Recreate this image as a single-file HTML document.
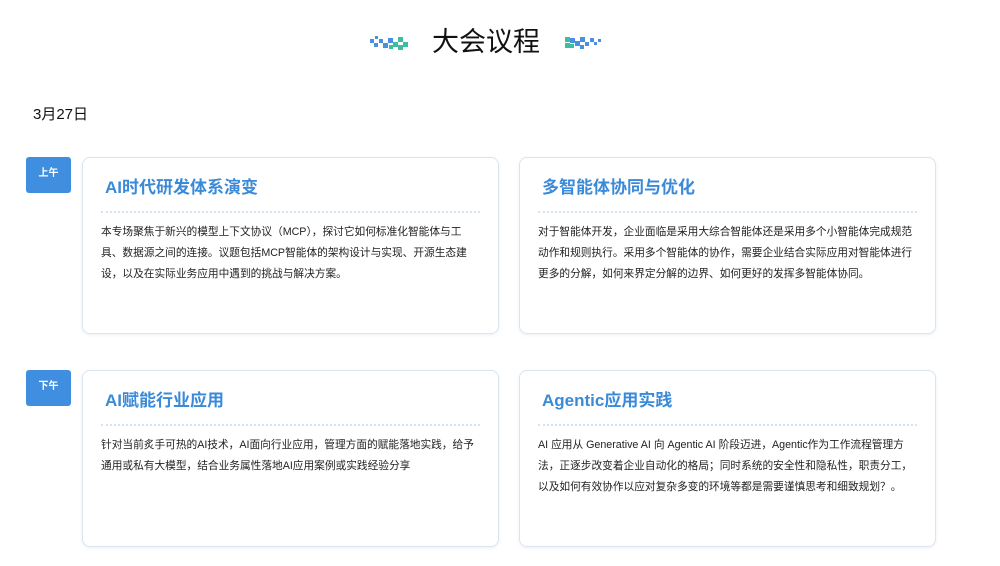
<!DOCTYPE html>
<html><head><meta charset="utf-8"><style>
*{margin:0;padding:0;box-sizing:border-box}
body{width:1000px;height:566px;background:#fff;font-family:"Liberation Sans","Noto Sans CJK SC",sans-serif;position:relative;overflow:hidden;color:#222}
.h{position:absolute;top:24px;left:432px;font-size:27px;color:#111;line-height:36px;white-space:nowrap}
.ic{position:absolute;top:35px}
.date{position:absolute;left:33px;top:103px;font-size:15px;color:#111}
.badge{position:absolute;left:26px;width:45px;height:36px;background:#3f8ee0;border-radius:3px;color:#fff;font-size:10px;text-align:center;line-height:34px;font-weight:bold}
.card{position:absolute;width:417px;height:177px;border:1px solid #d8e5f2;border-radius:8px;box-shadow:0 1px 3px rgba(120,150,190,.15);padding:0 18px}
.card h3{font-size:17px;color:#3a8ad8;font-weight:bold;margin-top:18px;margin-left:4px;height:24px;line-height:24px}
.card .ln{margin-top:11px;border-top:2px dotted #d5e3f3;margin-right:0}
.card p{margin-top:9px;font-size:10.7px;letter-spacing:0;line-height:21px;color:#222;white-space:nowrap}
</style></head><body>
<svg class="ic" style="left:370px" width="38" height="16" viewBox="0 0 38 16">
<g fill="#4a90e2"><rect x="0" y="4" width="4" height="4"/><rect x="4" y="8" width="4" height="4"/><rect x="9" y="4" width="4" height="4"/><rect x="13" y="8" width="5" height="5"/><rect x="18" y="3" width="5" height="5"/><rect x="5" y="1" width="3" height="3"/></g>
<g fill="#3cbfa0"><rect x="23" y="7" width="5" height="5"/><rect x="28" y="2" width="5" height="5"/><rect x="33" y="7" width="5" height="5"/><rect x="28" y="10" width="5" height="5"/><rect x="19" y="10" width="4" height="4"/></g></svg>
<div class="h">大会议程</div>
<svg class="ic" style="left:565px" width="38" height="16" viewBox="0 0 38 16">
<g fill="#3cbfa0"><rect x="0" y="2" width="5" height="5"/><rect x="0" y="8" width="5" height="5"/><rect x="5" y="9" width="4" height="4"/></g>
<g fill="#4a90e2"><rect x="5" y="3" width="5" height="5"/><rect x="10" y="6" width="5" height="5"/><rect x="15" y="2" width="5" height="5"/><rect x="20" y="7" width="4" height="4"/><rect x="25" y="3" width="4" height="4"/><rect x="29" y="7" width="3" height="3"/><rect x="33" y="4" width="3" height="3"/><rect x="15" y="10" width="4" height="4"/></g></svg>
<div class="date">3月27日</div>

<div class="badge" style="top:157px">上午</div>
<div class="card" style="left:82px;top:157px"><h3>AI时代研发体系演变</h3><div class="ln"></div><p>本专场聚焦于新兴的模型上下文协议（MCP），探讨它如何标准化智能体与工<br>具、数据源之间的连接。议题包括MCP智能体的架构设计与实现、开源生态建<br>设，以及在实际业务应用中遇到的挑战与解决方案。</p></div>
<div class="card" style="left:519px;top:157px"><h3>多智能体协同与优化</h3><div class="ln"></div><p>对于智能体开发，企业面临是采用大综合智能体还是采用多个小智能体完成规范<br>动作和规则执行。采用多个智能体的协作，需要企业结合实际应用对智能体进行<br>更多的分解，如何来界定分解的边界、如何更好的发挥多智能体协同。</p></div>

<div class="badge" style="top:370px">下午</div>
<div class="card" style="left:82px;top:370px"><h3>AI赋能行业应用</h3><div class="ln"></div><p>针对当前炙手可热的AI技术，AI面向行业应用，管理方面的赋能落地实践，给予<br>通用或私有大模型，结合业务属性落地AI应用案例或实践经验分享</p></div>
<div class="card" style="left:519px;top:370px"><h3>Agentic应用实践</h3><div class="ln"></div><p>AI 应用从 Generative AI 向 Agentic AI 阶段迈进，Agentic作为工作流程管理方<br>法，正逐步改变着企业自动化的格局；同时系统的安全性和隐私性，职责分工，<br>以及如何有效协作以应对复杂多变的环境等都是需要谨慎思考和细致规划？。</p></div>
</body></html>
